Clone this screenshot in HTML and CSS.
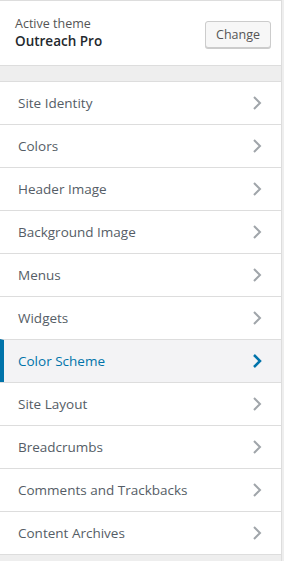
FILE: index.html
```html
<!DOCTYPE html>
<html lang="en">
<head>
  <meta charset="UTF-8">
  <title>Customize</title>
  <link rel="stylesheet" href="styles.css">
</head>
<body>
<div class="panel">
  <div class="theme-info">
    <div class="theme-text">
      <span class="theme-label">Active theme</span>
      <span class="theme-name">Outreach Pro</span>
    </div>
    <button class="change-btn">Change</button>
  </div>
  <div class="spacer"></div>
  <ul class="sections">
    <li class="section"><span>Site Identity</span><svg class="chev" viewBox="0 0 10 16"><path d="M2 2l6 6-6 6"/></svg></li>
    <li class="section"><span>Colors</span><svg class="chev" viewBox="0 0 10 16"><path d="M2 2l6 6-6 6"/></svg></li>
    <li class="section"><span>Header Image</span><svg class="chev" viewBox="0 0 10 16"><path d="M2 2l6 6-6 6"/></svg></li>
    <li class="section"><span>Background Image</span><svg class="chev" viewBox="0 0 10 16"><path d="M2 2l6 6-6 6"/></svg></li>
    <li class="section"><span>Menus</span><svg class="chev" viewBox="0 0 10 16"><path d="M2 2l6 6-6 6"/></svg></li>
    <li class="section"><span>Widgets</span><svg class="chev" viewBox="0 0 10 16"><path d="M2 2l6 6-6 6"/></svg></li>
    <li class="section active"><span>Color Scheme</span><svg class="chev" viewBox="0 0 10 16"><path d="M2 2l6 6-6 6"/></svg></li>
    <li class="section"><span>Site Layout</span><svg class="chev" viewBox="0 0 10 16"><path d="M2 2l6 6-6 6"/></svg></li>
    <li class="section"><span>Breadcrumbs</span><svg class="chev" viewBox="0 0 10 16"><path d="M2 2l6 6-6 6"/></svg></li>
    <li class="section"><span>Comments and Trackbacks</span><svg class="chev" viewBox="0 0 10 16"><path d="M2 2l6 6-6 6"/></svg></li>
    <li class="section"><span>Content Archives</span><svg class="chev" viewBox="0 0 10 16"><path d="M2 2l6 6-6 6"/></svg></li>
  </ul>
</div>
</body>
</html>
```

FILE: styles.css
```css
:root {
  --blue: #0073aa;
  --line: #dddddd;
  --text: #555d66;
}
body {
  margin: 0;
  background: #eeeeee;
  font-family: 'Open Sans', sans-serif;
  color: var(--text);
}
.panel {
  width: 281px;
  border-right: 1px solid var(--line);
  background: #eeeeee;
  min-height: 561px;
}
.theme-info {
  display: flex;
  align-items: center;
  justify-content: space-between;
  background: white;
  border-top: 1px solid var(--line);
  border-bottom: 1px solid var(--line);
  height: 64px;
  padding: 0 10px 0 15px;
}
.theme-text {
  display: flex;
  flex-direction: column;
}
.theme-label {
  font-size: 12.5px;
  color: #555;
  line-height: 17px;
}
.theme-name {
  font-size: 13.5px;
  font-weight: 600;
  color: #23282d;
  line-height: 19px;
}
.change-btn {
  font-family: inherit;
  font-size: 12.5px;
  color: #555;
  background: #f7f7f7;
  border: 1px solid #cccccc;
  border-radius: 3px;
  box-shadow: 0 1px 0 #cccccc;
  height: 27px;
  padding: 0 10px;
  margin-top: 3px;
}
.spacer {
  height: 15px;
}
.sections {
  list-style: none;
  margin: 0;
  padding: 0;
  background: white;
  border-bottom: 1px solid var(--line);
}
.section {
  display: flex;
  align-items: center;
  justify-content: space-between;
  height: 42px;
  border-top: 1px solid var(--line);
  padding: 0 18px;
  font-size: 13.5px;
}
.section .chev {
  width: 10px;
  height: 16px;
  fill: none;
  stroke: #a0a5aa;
  stroke-width: 2;
  margin-right: 1px;
}
.section.active {
  background: #f3f3f5;
  color: var(--blue);
  border-left: 4px solid var(--blue);
  padding-left: 14px;
}
.section.active .chev {
  stroke: var(--blue);
  stroke-width: 2.5;
}
```
